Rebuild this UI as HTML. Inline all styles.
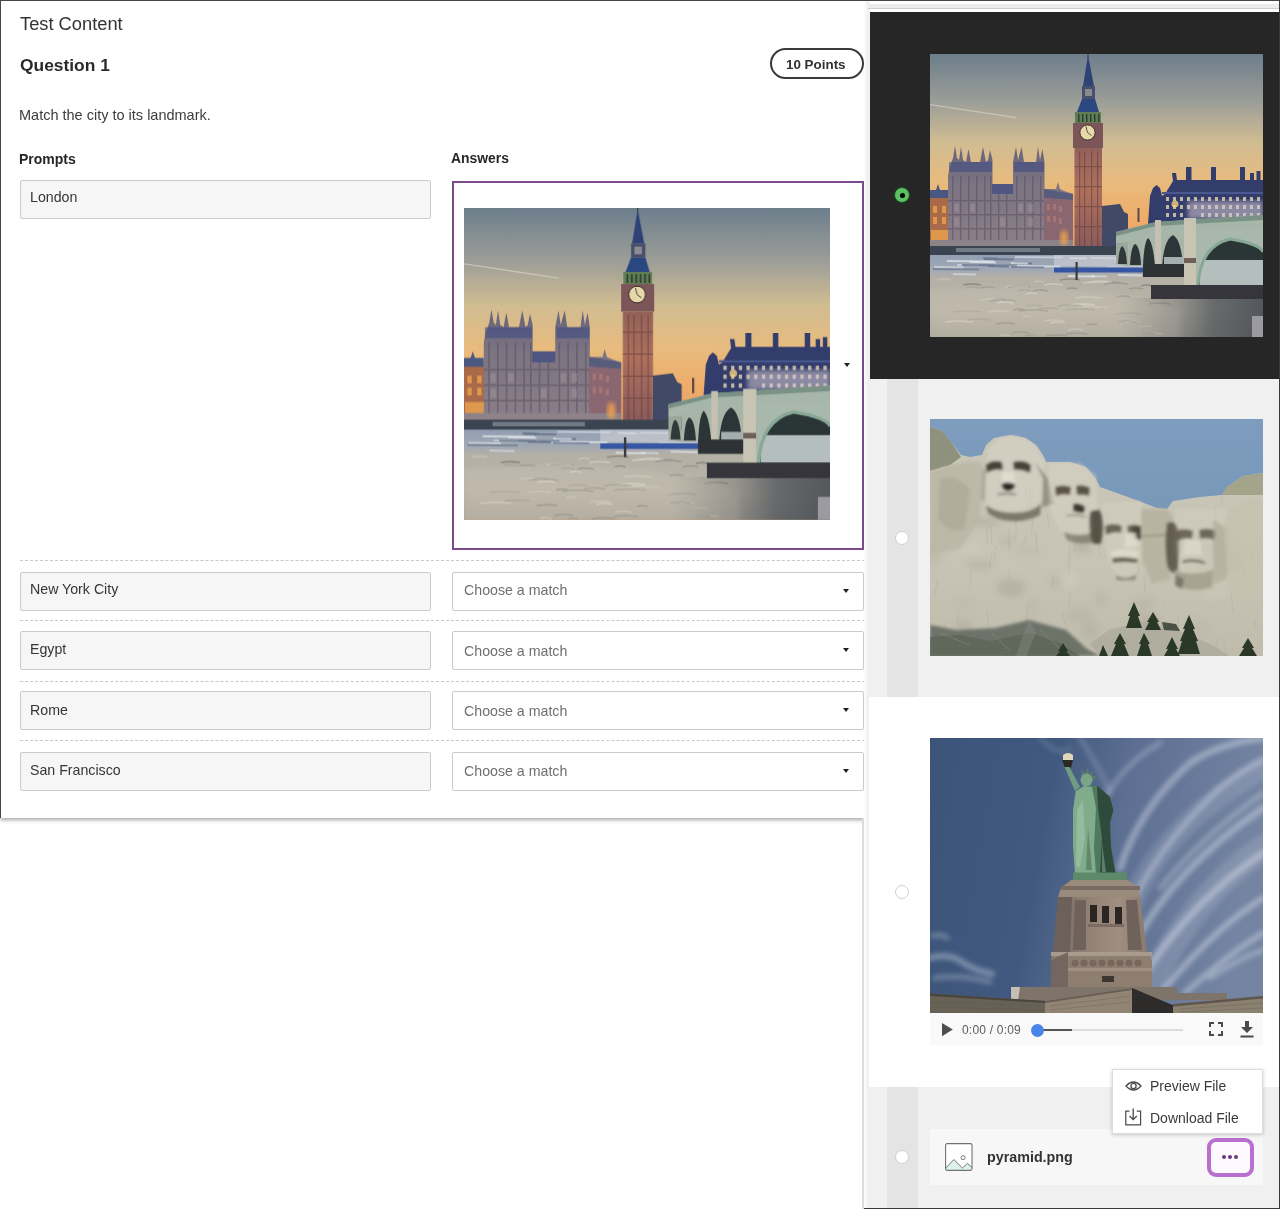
<!DOCTYPE html>
<html><head><meta charset="utf-8">
<style>
*{box-sizing:border-box;margin:0;padding:0}
html,body{width:1280px;height:1209px;overflow:hidden;background:#fff}
body{position:relative;font-family:"Liberation Sans",sans-serif;color:#333;-webkit-font-smoothing:antialiased}
.t,.prompt span,.sel span{will-change:transform}
.abs{position:absolute}
.t{position:absolute;white-space:nowrap;line-height:1}
#card{position:absolute;left:0;top:0;width:865px;height:818px;background:#fff;box-shadow:0 2px 4px rgba(0,0,0,.35)}
.prompt{position:absolute;left:20px;width:411px;height:39px;background:#f6f6f6;border:1px solid #cbcbcb;border-radius:2px}
.prompt span{position:absolute;left:8.7px;top:9.2px;font-size:14.2px;color:#363636;line-height:1}
.sel{position:absolute;left:452px;width:412px;height:39px;background:#fff;border:1px solid #cbcbcb;border-radius:2px}
.sel span{position:absolute;left:11px;top:10.2px;font-size:14.2px;color:#6f6f6f;line-height:1}
.tri{position:absolute;width:0;height:0;border-left:3px solid transparent;border-right:3px solid transparent;border-top:4px solid #222}
.sel .tri{left:390px;top:16px}
.dash{position:absolute;left:20px;width:845px;height:0;border-top:1px dashed #c8c8c8}
#rp{position:absolute;left:864px;top:0;width:416px;height:1209px;background:#fff}
.radio{position:absolute;width:14px;height:14px;border-radius:50%;background:#fff;border:1px solid #cfcfcf}
</style></head><body>
<!-- top border line -->
<div class="abs" style="left:0;top:0;width:1280px;height:1px;background:#444;z-index:50"></div>
<div class="abs" style="left:1279px;top:0;width:1px;height:1209px;background:#3a3a3a;z-index:50"></div>
<div class="abs" style="left:864px;top:1208px;width:416px;height:1px;background:#3a3a3a;z-index:50"></div>

<div id="card">
  <div class="abs" style="left:0;top:0;width:1px;height:818px;background:#464646;z-index:5"></div>
  <div class="t" style="left:19.5px;top:15px;font-size:18.3px;color:#333">Test Content</div>
  <div class="t" style="left:19.5px;top:57px;font-size:17.4px;font-weight:700;color:#2a2a2a">Question 1</div>
  <div class="abs" style="left:770px;top:48px;width:94px;height:31px;border:2px solid #3a3a3a;border-radius:16px"></div>
  <div class="t" style="left:786px;top:58px;font-size:13.4px;font-weight:700;color:#303030">10 Points</div>
  <div class="t" style="left:19px;top:108px;font-size:14.5px;color:#3c3c3c">Match the city to its landmark.</div>
  <div class="t" style="left:19px;top:152px;font-size:14px;font-weight:700;color:#262626">Prompts</div>
  <div class="t" style="left:451px;top:152px;font-size:13.9px;font-weight:700;color:#262626">Answers</div>

  <div class="prompt" style="top:180px"><span>London</span></div>
  <div class="abs" style="left:452px;top:181px;width:412px;height:369px;border:2px solid #7b4b8c;background:#fff">
    <svg class="abs" style="left:10px;top:25px" width="366" height="312"><use href="#london" width="366" height="312"/></svg>
    <div class="tri" style="left:390px;top:180px"></div>
  </div>

  <div class="dash" style="top:560px"></div>
  <div class="prompt" style="top:572px"><span>New York City</span></div>
  <div class="sel" style="top:572px"><span>Choose a match</span><div class="tri"></div></div>
  <div class="dash" style="top:620px"></div>
  <div class="prompt" style="top:631px"><span style="top:10.4px">Egypt</span></div>
  <div class="sel" style="top:631px"><span style="top:11.6px">Choose a match</span><div class="tri"></div></div>
  <div class="dash" style="top:681px"></div>
  <div class="prompt" style="top:691px"><span style="top:10.9px">Rome</span></div>
  <div class="sel" style="top:691px"><span style="top:11.6px">Choose a match</span><div class="tri"></div></div>
  <div class="dash" style="top:740px"></div>
  <div class="prompt" style="top:752px"><span style="top:10.2px">San Francisco</span></div>
  <div class="sel" style="top:752px"><span style="top:11.2px">Choose a match</span><div class="tri"></div></div>
</div>

<div id="rp">
  <!-- left light edge -->
  <div class="abs" style="left:0;top:0;width:6px;height:1209px;background:linear-gradient(90deg,#fdfdfd,#efefef 75%,#f4f4f4)"></div>
  <div class="abs" style="left:-2px;top:818px;width:2px;height:391px;background:#dcdcdc"></div>
  <div class="abs" style="left:4px;top:4px;width:412px;height:5px;background:#ececec"></div>
  <div class="abs" style="left:4px;top:8px;width:412px;height:1px;background:#cfcfcf"></div>

  <!-- section 1 dark -->
  <div class="abs" style="left:6px;top:12px;width:410px;height:367px;background:#262626">
  </div>
  <div class="abs" style="left:30px;top:187px;width:16px;height:16px;border-radius:50%;background:#5cbf62;border:1px solid #1a4a1f"></div>
  <div class="abs" style="left:35.5px;top:192.5px;width:5px;height:5px;border-radius:50%;background:#000"></div>
  <svg class="abs" style="left:66px;top:54px" width="333" height="283"><use href="#london" width="333" height="283"/></svg>

  <!-- section 2 gray -->
  <div class="abs" style="left:6px;top:379px;width:410px;height:318px;background:#f0f0f0"></div>
  <div class="abs" style="left:23px;top:379px;width:31px;height:318px;background:#e4e4e4"></div>
  <div class="radio" style="left:31px;top:531px"></div>
  <svg class="abs" style="left:66px;top:419px" width="333" height="237" viewBox="0 0 333 237" id="rushmore">
    <defs>
      <linearGradient id="rsky" x1="0" y1="0" x2="0" y2="1"><stop offset="0" stop-color="#7e9dbe"/><stop offset="1" stop-color="#7090b0"/></linearGradient>
      <linearGradient id="rstone" x1="0" y1="0" x2="0" y2="1"><stop offset="0" stop-color="#c9c6b8"/><stop offset="0.6" stop-color="#c7c4b5"/><stop offset="1" stop-color="#bfbcac"/></linearGradient>
      <filter id="rblur" x="-5%" y="-5%" width="110%" height="110%"><feGaussianBlur stdDeviation="1.5"/></filter>
      <clipPath id="rclip"><path d="M0 8 L12 12 L22 24 L31 36 L40 38 L52 36 L56 26 L64 19 L81 16 L96 19 L106 26 L113 36 L116 43 L140 43 L156 48 L166 60 L170 68 L198 78 L227 89 L237 90 L243 82 L270 78 L292 76 L297 68 L313 57 L333 54 L333 237 L0 237Z"/></clipPath>
      <filter id="rblur3" x="-10%" y="-10%" width="120%" height="120%"><feGaussianBlur stdDeviation="3"/></filter>
    </defs>
    <rect width="333" height="237" fill="url(#rsky)"/>
    <path d="M0 8 L12 12 L22 24 L31 36 L40 38 L52 36 L56 26 L64 19 L81 16 L96 19 L106 26 L113 36 L116 43 L140 43 L156 48 L166 60 L170 68 L198 78 L227 89 L237 90 L243 82 L270 78 L292 76 L297 68 L313 57 L333 54 L333 237 L0 237Z" fill="url(#rstone)"/>
    <g filter="url(#rblur3)"><ellipse cx="171" cy="180" rx="6" ry="8" fill="#a8a494" opacity="0.24"/><ellipse cx="300" cy="143" rx="14" ry="11" fill="#9c9888" opacity="0.20"/><ellipse cx="221" cy="208" rx="12" ry="11" fill="#9c9888" opacity="0.26"/><ellipse cx="214" cy="184" rx="11" ry="5" fill="#a8a494" opacity="0.27"/><ellipse cx="152" cy="127" rx="9" ry="8" fill="#9c9888" opacity="0.26"/><ellipse cx="57" cy="103" rx="13" ry="5" fill="#9c9888" opacity="0.32"/><ellipse cx="268" cy="210" rx="11" ry="11" fill="#b4b0a0" opacity="0.16"/><ellipse cx="34" cy="186" rx="14" ry="5" fill="#b4b0a0" opacity="0.21"/><ellipse cx="265" cy="128" rx="7" ry="6" fill="#9c9888" opacity="0.27"/><ellipse cx="81" cy="169" rx="14" ry="9" fill="#9c9888" opacity="0.34"/><ellipse cx="160" cy="212" rx="9" ry="10" fill="#9c9888" opacity="0.18"/><ellipse cx="50" cy="146" rx="14" ry="5" fill="#9c9888" opacity="0.25"/><ellipse cx="293" cy="159" rx="9" ry="10" fill="#dcd8ca" opacity="0.19"/><ellipse cx="241" cy="117" rx="10" ry="12" fill="#dcd8ca" opacity="0.32"/><ellipse cx="215" cy="198" rx="11" ry="9" fill="#b4b0a0" opacity="0.35"/><ellipse cx="98" cy="131" rx="13" ry="6" fill="#b4b0a0" opacity="0.26"/><ellipse cx="103" cy="189" rx="6" ry="12" fill="#b4b0a0" opacity="0.25"/><ellipse cx="150" cy="196" rx="13" ry="9" fill="#a8a494" opacity="0.25"/><ellipse cx="274" cy="146" rx="12" ry="12" fill="#b4b0a0" opacity="0.24"/><ellipse cx="285" cy="175" rx="13" ry="5" fill="#dcd8ca" opacity="0.19"/><ellipse cx="77" cy="122" rx="8" ry="6" fill="#a8a494" opacity="0.29"/><ellipse cx="288" cy="129" rx="14" ry="7" fill="#a8a494" opacity="0.23"/><ellipse cx="38" cy="130" rx="14" ry="4" fill="#dcd8ca" opacity="0.24"/><ellipse cx="2" cy="139" rx="9" ry="8" fill="#9c9888" opacity="0.19"/><ellipse cx="125" cy="163" rx="6" ry="6" fill="#a8a494" opacity="0.28"/><ellipse cx="140" cy="161" rx="8" ry="8" fill="#dcd8ca" opacity="0.29"/><ellipse cx="242" cy="134" rx="12" ry="10" fill="#dcd8ca" opacity="0.31"/><ellipse cx="34" cy="209" rx="8" ry="9" fill="#9c9888" opacity="0.26"/></g>
    <path d="M0 8 L12 12 L22 24 L31 38 L20 46 L0 52Z" fill="#8e927c"/>
    <path d="M292 76 L297 68 L313 57 L333 54 L333 76Z" fill="#a4a48a"/>
    <path d="M79 150 l0.6 12 M208 71 l2.0 6 M86 99 l-0.2 22 M279 139 l-2.1 16 M211 203 l1.4 14 M224 71 l0.5 18 M100 65 l-0.2 20 M239 205 l2.5 17 M132 192 l2.6 13 M293 76 l-1.7 8 M322 132 l-1.2 16 M169 124 l0.5 12 M195 209 l2.6 17 M285 224 l-2.0 17 M287 219 l0.4 20 M238 95 l0.4 19 M95 70 l2.9 20 M29 192 l-2.1 13 M98 187 l-2.7 20 M205 67 l-1.0 17 M293 222 l3.0 14 M103 73 l-2.8 16 M66 127 l-2.1 16 M14 203 l2.8 11 M299 122 l0.1 13 M214 158 l0.7 15 M313 144 l1.3 13 M79 110 l0.1 22 M183 62 l0.5 13 M7 162 l-2.6 16 M209 137 l-0.9 17 M235 182 l-2.6 6 M225 219 l-0.3 10 M197 113 l-1.1 12 M123 158 l-0.7 11 M257 64 l1.4 15 M103 97 l-1.6 19 M62 132 l-2.4 17 M107 115 l-0.4 19 M285 88 l0.9 11 M295 134 l-2.3 10 M176 91 l2.0 19 M61 106 l0.9 19 M268 117 l-1.2 8 M264 105 l-0.5 12 M140 128 l-2.1 21 M2 216 l2.9 20 M145 217 l-1.7 21 M248 198 l0.1 17 M96 116 l-2.6 10 M196 107 l-2.7 19 M301 174 l2.4 21 M300 155 l1.5 6 M57 109 l0.1 17 M138 215 l-1.0 16 M84 202 l1.7 14 M117 93 l1.9 15 M57 191 l1.8 21 M274 61 l2.2 16 M17 105 l0.2 10 M141 138 l-3.0 18 M18 81 l-2.6 8 M325 201 l0.0 7 M105 112 l0.9 12 M195 120 l-1.0 9 M41 152 l-0.7 17 M27 89 l0.6 12 M261 123 l0.7 19 M144 121 l1.2 14 M140 175 l-1.5 13" stroke="#8a8676" stroke-width=".8" opacity=".2" fill="none" clip-path="url(#rclip)"/>
    <g filter="url(#rblur)">
      <path d="M0 52 L20 46 L40 42 L52 44 L50 100 L30 130 L0 135Z" fill="#b4b09e" opacity=".6"/>
      <path d="M10 60 Q25 55 40 70 L35 110 Q20 115 8 100Z" fill="#a4a090" opacity=".5"/>
      <!-- Washington -->
      <path d="M54 84 L57.5 31 L71 18 L87.5 17 L105 26 L115 43.5 L113 80 Q100 92 84 92 Q64 92 54 84Z" fill="#d8d4c6" opacity=".55"/>
      <path d="M56 46 Q62 40 72 43 L73 51 Q64 49 57 54Z" fill="#4a4236"/>
      <path d="M83 43 Q94 40 101 46 L100 54 Q92 50 84 51Z" fill="#4a4236"/>
      <path d="M72 53 L84 53 L86 66 L72 66Z" fill="#e2decf" opacity=".8"/>
      <path d="M71.5 65 Q78 62 85.5 65.5 Q84 72 78 72 Q72 72 71.5 65Z" fill="#2e2a24"/>
      <path d="M67.5 75.5 Q77 73.5 86 75.5" stroke="#6a6252" stroke-width="1.5" fill="none"/>
      <path d="M56 86 Q66 94 84 94 Q102 94 111 85 L110 96 Q96 103 82 102 Q66 101 58 94Z" fill="#5e574a" opacity=".7"/>
      <path d="M105 43 L118 60 L124 85 L112 88 L113 60Z" fill="#8a8474" opacity=".8"/>
      <path d="M52 50 L56 50 L55 84 L51 80Z" fill="#9a9686" opacity=".6"/>
      <!-- Jefferson -->
      <path d="M118 44 L150 44 L166 56 L168 90 L162 114 Q145 118 130 112 L120 92 L118 60Z" fill="#d8d4c6" opacity=".5"/>
      <path d="M125 68 Q133 65 141 68 L140 76 Q133 74 126 77Z" fill="#5a5244"/>
      <path d="M146 67 Q154 65 160 69 L159 77 Q153 75 147 76Z" fill="#5a5244"/>
      <path d="M143 85 Q150 83 155 88 L154 94 Q148 94 143 92Z" fill="#3e382e"/>
      <path d="M136 97 Q146 95 156 98" stroke="#7a7262" stroke-width="1.2" fill="none"/>
      <path d="M134 113 Q150 119 166 112 L165 123 Q150 127 137 121Z" fill="#6a6252" opacity=".6"/>
      <path d="M162 93 L170 90 L171 125 L163 125Z" fill="#5e584a" opacity=".8"/>
      <!-- Roosevelt -->
      <path d="M160 93 Q168 88 172 96 Q175 110 171 124 Q164 126 161 120 Q158 106 160 93Z" fill="#544e42" opacity=".85"/>
      <path d="M172 84 L212 82 L213 130 Q210 158 194 159 Q180 156 176 130Z" fill="#d6d2c4" opacity=".45"/>
      <path d="M175 107 Q183 103 192 107 L191 114 Q184 112 176 116Z" fill="#5a5242" opacity=".85"/><path d="M197 107 Q205 104 211 107 L211 115 Q204 113 198 114Z" fill="#5a5242" opacity=".85"/>
      <path d="M202 108 L211 108 L211 121 L203 119Z" fill="#4a4236"/>
      <path d="M195 114 L206 114 L208 128 L194 128Z" fill="#e0dccf" opacity=".8"/>
      <path d="M181 132 Q195 128 209 133 L208 140 Q195 137 182 140Z" fill="#dcd8ca"/>
      <path d="M182 139 Q195 137 208 140 L207 144 Q195 142 183 144Z" fill="#6a6454"/>
      <path d="M186 156 Q195 162 206 156 L205 161 L187 161Z" fill="#7a7464" opacity=".8"/>
      <path d="M211 90 L237 90 L243 98 L240 160 L222 165 L212 140Z" fill="#b4b09e" opacity=".8"/>
      <path d="M212 117 L236 116" stroke="#7a7464" stroke-width="1.2"/>
      <!-- Lincoln -->
      <path d="M237 104 Q246 100 249 112 Q251 132 247 154 Q240 156 237 146 Q234 124 237 104Z" fill="#544e42" opacity=".85"/>
      <path d="M245 90 L297 90 L298 140 Q292 168 270 170 Q252 168 248 140Z" fill="#d4d0c2" opacity=".45"/>
      <path d="M246 112 Q254 108 263 112 L262 120 Q255 118 247 122Z" fill="#5e5646" opacity=".85"/><path d="M269 111 Q278 108 286 112 L285 121 Q277 118 270 120Z" fill="#5e5646" opacity=".85"/>
      <path d="M255 121 L270 121 L272 136 L254 136Z" fill="#dedacc" opacity=".8"/>
      <path d="M252.5 143 Q263 140 275 144" stroke="#5a5244" stroke-width="2.2" fill="none"/>
      <path d="M244 151 Q262 158 283 151 L282 168 Q264 174 246 167Z" fill="#a8a290"/>
      <path d="M246 156 L254 160 L252 170 L245 166Z" fill="#6a6454" opacity=".7"/>
      <path d="M283 100 L298 110 L297 160 L283 165Z" fill="#aaa694" opacity=".6"/>
      <path d="M294 96 L320 80 L333 84 L333 180 L300 175 L296 140Z" fill="#c6c2ae" opacity=".7"/>
    </g>
    <!-- bottom dark rock -->
    <path d="M0 206 L26 211 L65 209 L99 201 L110 204 L136 211 L157 230 L170 237 L0 237Z" fill="#6e736a" filter="url(#rblur)"/>
    <path d="M0 218 L30 216 L60 222 L100 214 L130 224 L150 237 L0 237Z" fill="#5a6256" opacity=".7"/>
    <path d="M99 201 L106 214 L96 237 L86 237 L94 214Z" fill="#8e9486" opacity=".35"/>
    <path d="M10 214 L40 226 M60 212 L80 232 M110 210 L130 230" stroke="#8a9080" stroke-width="1" opacity=".5"/>
    <!-- rubble slope -->
    <path d="M160 225 L180 210 L215 203 L250 212 L280 225 L300 237 L170 237Z" fill="#aaa898" opacity=".7"/>
    <!-- trees -->
    <g fill="#2a3828">
      <path d="M204 183 L198 197 L200 197 L196 209 L212 209 L208 197 L210 197Z"/>
      <path d="M223 193 L217 203 L219 203 L215 211 L231 211 L227 203 L229 203Z"/>
      <path d="M259 196 L253 210 L255 210 L250 222 L252 222 L248 235 L270 235 L266 222 L268 222 L263 210 L265 210Z"/>
      <path d="M190 214 L184 225 L186 225 L181 237 L199 237 L194 225 L196 225Z"/>
      <path d="M214 214 L209 225 L211 225 L207 237 L222 237 L218 225 L220 225Z"/>
      <path d="M242 218 L236 230 L238 230 L234 237 L250 237 L246 230 L248 230Z"/>
      <path d="M318 219 L312 229 L314 229 L309 237 L327 237 L322 229 L324 229Z"/>
      <path d="M133 224 L128 232 L130 232 L126 237 L140 237 L136 232 L138 232Z"/>
      <path d="M173 226 L169 237 L178 237Z"/>
      <path d="M232 203 L246 205 L250 212 L234 211Z" opacity=".8"/>
    </g>
  </svg>

  <!-- section 3 white -->
  <div class="abs" style="left:5px;top:697px;width:411px;height:390px;background:#fff"></div>
  <div class="radio" style="left:31px;top:885px"></div>
  <svg class="abs" style="left:66px;top:738px" width="333" height="275" viewBox="0 0 333 275" id="statue">
    <defs>
      <linearGradient id="ssky" x1="0" y1="0" x2="1" y2="0.15">
        <stop offset="0" stop-color="#3c5479"/>
        <stop offset="0.38" stop-color="#42597f"/>
        <stop offset="0.6" stop-color="#5c6e92"/>
        <stop offset="1" stop-color="#7484a2"/>
      </linearGradient>
      <linearGradient id="sbody" x1="0" y1="0" x2="1" y2="0">
        <stop offset="0" stop-color="#7aaa88"/>
        <stop offset="0.5" stop-color="#5e8e70"/>
        <stop offset="1" stop-color="#2e4a3a"/>
      </linearGradient>
      <linearGradient id="sped" x1="0" y1="0" x2="1" y2="0">
        <stop offset="0" stop-color="#6e625c"/>
        <stop offset="0.3" stop-color="#8e7e72"/>
        <stop offset="0.7" stop-color="#a08e80"/>
        <stop offset="1" stop-color="#8a7a6e"/>
      </linearGradient>
      <filter id="sblur" x="-20%" y="-20%" width="140%" height="140%"><feGaussianBlur stdDeviation="2.6"/></filter>
    </defs>
    <rect width="333" height="275" fill="url(#ssky)"/>
    <g filter="url(#sblur)" fill="none" stroke="#ccd4e2" stroke-linecap="round">
      <path d="M200 170 Q230 90 333 30" stroke-width="22" opacity=".18"/>
      <path d="M220 250 Q260 160 333 110" stroke-width="26" opacity=".2"/>
      <path d="M190 130 Q210 70 260 25 Q290 5 333 0" stroke-width="7" opacity=".5"/>
      <path d="M195 180 Q225 110 290 50 Q315 30 333 22" stroke-width="6" opacity=".45"/>
      <path d="M205 205 Q245 130 333 70" stroke-width="7" opacity=".5"/>
      <path d="M215 235 Q265 160 333 115" stroke-width="7" opacity=".55"/>
      <path d="M235 250 Q285 190 333 160" stroke-width="6" opacity=".55"/>
      <path d="M255 255 Q300 215 333 195" stroke-width="6" opacity=".5"/>
      <path d="M230 150 Q270 100 333 55" stroke-width="5" opacity=".4"/>
      <path d="M280 240 Q310 220 333 212" stroke-width="5" opacity=".45"/>
      <path d="M175 60 Q195 25 230 5" stroke-width="6" opacity=".3"/>
      <path d="M150 0 Q170 30 180 55" stroke-width="5" opacity=".22"/>
      <path d="M110 0 Q130 20 140 10" stroke-width="4" opacity=".18"/>
      <path d="M2 198 Q10 195 18 200" stroke-width="4" opacity=".4"/>
      <path d="M0 220 Q20 214 35 226 Q45 232 62 236" stroke-width="6" opacity=".45"/>
      <path d="M5 240 Q30 236 60 244" stroke-width="5" opacity=".35"/>
    </g>
    <!-- statue -->
    <path d="M133 17 Q138 13 143 17 L143 22 L133 22Z" fill="#e0d8b8"/>
    <path d="M132 22 L143 22 L141 29.7 L135 29.7Z" fill="#2a2a22"/>
    <path d="M134.5 29 L139.5 29 L150 49 L145 53Z" fill="#6e9c80"/>
    <path d="M151 38 L152 31 L155 36 L158 29 L159 36 L163 32 L162 38 L167 38 L163 43Z" fill="#5a8068" opacity=".8"/>
    <ellipse cx="156.5" cy="42" rx="6" ry="6.5" fill="#7aa686"/>
    <path d="M145.8 53 L154 48 L167 47.5 L180 59 L183.4 72 L180 85 L181 109 L185.6 136 L145 136 L143 106.6 L143 72Z" fill="#4e7a60"/>
    <path d="M145.8 53 L154 48 L162 49 L166 70 L164 110 L166 136 L145 136 L143 106.6 L143 72Z" fill="#80ac8c"/>
    <path d="M147 72 L153 62 L155 100 L150 130 L146 128Z" fill="#a4c8ac" opacity=".55"/>
    <path d="M167 47.5 L180 59 L183.4 72 L180 85 L181 109 L185.6 136 L170 136 L172 100 L168 70Z" fill="#2e4a3a"/>
    <path d="M158 90 L162 132 L156 132Z" fill="#4a6e58" opacity=".6"/>
    <path d="M172 105 L176 134 L172 134Z" fill="#8ab094" opacity=".5"/>
    <!-- pedestal -->
    <rect x="143" y="134.5" width="54" height="8" fill="#5c8a6a"/>
    <path d="M141 142 L198 142 L209 150 L210 159 L128 159 L131 150Z" fill="#9a8a7c"/>
    <rect x="131" y="148" width="79" height="4" fill="#7a6c62"/>
    <path d="M128 159 L210 159 L217 214 L123 214Z" fill="url(#sped)"/>
    <path d="M128 159 L142 159 L140 214 L123 214Z" fill="#6c605a"/>
    <g fill="#6e625a"><path d="M145 162 L156 162 L156 212 L143 212Z"/><path d="M196 162 L207 162 L212 212 L198 212Z"/></g>
    <g fill="#2c2622"><rect x="160" y="167" width="7" height="17"/><rect x="172" y="168" width="7" height="17"/><rect x="185" y="169" width="7" height="17"/></g>
    <rect x="158" y="186" width="36" height="3" fill="#7a6c62"/>
    <path d="M123 214 L217 214 L222 222 L222 249 L121 249 L121 222Z" fill="#8e7e70"/>
    <rect x="121" y="214" width="101" height="4" fill="#a89a8c"/>
    <g fill="#76665c"><circle cx="145" cy="225" r="3.6"/><circle cx="154" cy="225" r="3.6"/><circle cx="163" cy="225" r="3.6"/><circle cx="172" cy="225" r="3.6"/><circle cx="181" cy="225" r="3.6"/><circle cx="190" cy="225" r="3.6"/><circle cx="199" cy="225" r="3.6"/><circle cx="208" cy="225" r="3.6"/></g>
    <rect x="136" y="230" width="86" height="3" fill="#a09080"/>
    <path d="M121 222 L138 214 L138 249 L121 249Z" fill="#6e625a" opacity=".85"/>
    <rect x="172" y="238" width="12" height="6" fill="#3e3630"/>
    <!-- fort -->
    <path d="M81 249 L247 249 L247 255 L297 255 L297 262 L81 263Z" fill="#7e746a"/>
    <path d="M81 249 L90 249 L88 263 L81 263Z" fill="#d8d0c8" opacity=".8"/>
    <path d="M0 255.5 L115 263 L115 275 L0 275Z" fill="#686256"/>
    <path d="M0 255.5 L115 263 L115 265 L0 258Z" fill="#4a463e"/>
    <path d="M115 263 L202 250 L202 275 L115 275Z" fill="#928474"/>
    <path d="M115 263 L202 250 L202 252 L115 265Z" fill="#6a5e54"/>
    <path d="M202 250 L245 268 L245 275 L202 275Z" fill="#2e2c2a"/>
    <path d="M243 266 L333 258 L333 275 L243 275Z" fill="#8a8070"/>
    <path d="M243 266 L333 258 L333 260.5 L243 268.5Z" fill="#5e564e"/>
    <g stroke="#5a5046" stroke-width=".6" opacity=".45"><path d="M0 264 L115 268 M0 269 L115 272 M120 268 L200 258 M120 272 L200 264 M250 271 L333 265 M250 274 L333 270"/></g>
  </svg>
  <div class="abs" style="left:66px;top:1013px;width:333px;height:32px;background:#f9f9f9"></div>
  <svg class="abs" style="left:77.5px;top:1022.5px" width="12" height="14" viewBox="0 0 12 14"><path d="M0 0 L10.8 6.6 L0 13.2Z" fill="#4e4e4e"/></svg>
  <div class="t" style="left:97.5px;top:1023.5px;font-size:12px;letter-spacing:.2px;color:#5c5c5c">0:00 / 0:09</div>
  <div class="abs" style="left:173px;top:1029px;width:146px;height:2px;background:#dcdcdc"></div>
  <div class="abs" style="left:173px;top:1029px;width:35px;height:2px;background:#555"></div>
  <div class="abs" style="left:166.5px;top:1023.5px;width:13px;height:13px;border-radius:50%;background:#4a84e8"></div>
  <svg class="abs" style="left:345px;top:1022px" width="14" height="14" viewBox="0 0 14 14"><path d="M1 5 V1 H5 M9 1 H13 V5 M13 9 V13 H9 M5 13 H1 V9" stroke="#4a4a4a" stroke-width="2" fill="none"/></svg>
  <svg class="abs" style="left:376px;top:1021px" width="14" height="17" viewBox="0 0 14 17"><path d="M5 0 H9 V6 H13 L7 12 L1 6 H5Z" fill="#4a4a4a"/><rect x="0.5" y="14.5" width="13" height="2" fill="#4a4a4a"/></svg>

  <!-- section 4 gray -->
  <div class="abs" style="left:6px;top:1087px;width:410px;height:121px;background:#f0f0f0"></div>
  <div class="abs" style="left:23px;top:1087px;width:31px;height:121px;background:#e4e4e4"></div>
  <div class="radio" style="left:31px;top:1150px"></div>
  <div class="abs" style="left:66px;top:1129px;width:333px;height:56px;background:#f7f7f7"></div>
  <svg class="abs" style="left:81px;top:1143px" width="28" height="28" viewBox="0 0 28 28">
    <rect x="0.6" y="0.6" width="26.4" height="26.8" rx="1.6" fill="#fff"/>
    <path d="M0.8 25 L8.8 16.6 L17.5 25 L22.4 20.4 L27 24.6 L27 27.4 L0.8 27.4Z" fill="#dcf3ea"/>
    <path d="M0.8 25 L8.8 16.6 L17.5 25 L22.4 20.4 L27 24.6" stroke="#6f7775" stroke-width="1" fill="none"/>
    <rect x="0.6" y="0.6" width="26.4" height="26.8" rx="1.6" fill="none" stroke="#6f7473" stroke-width="1.1"/>
    <circle cx="18.1" cy="14.7" r="2" fill="none" stroke="#6f7775" stroke-width="1"/>
  </svg>
  <div class="t" style="left:123px;top:1150px;font-size:14.3px;font-weight:700;color:#333">pyramid.png</div>
  <div class="abs" style="left:343px;top:1138px;width:47px;height:39px;border:4px solid #b86fd0;border-radius:9px;background:#fcfafc"></div>
  <div class="abs" style="left:358px;top:1155px;width:4px;height:4px;border-radius:50%;background:#6a3a80"></div>
  <div class="abs" style="left:364px;top:1155px;width:4px;height:4px;border-radius:50%;background:#6a3a80"></div>
  <div class="abs" style="left:370px;top:1155px;width:4px;height:4px;border-radius:50%;background:#6a3a80"></div>
  <!-- menu -->
  <div class="abs" style="left:248px;top:1069px;width:151px;height:65px;background:#fff;border:1px solid #dcdcdc;box-shadow:0 1px 4px rgba(0,0,0,.2)"></div>
  <svg class="abs" style="left:261px;top:1080px" width="17" height="12" viewBox="0 0 17 12"><path d="M1 6 Q8.5 -2 16 6 Q8.5 14 1 6Z" fill="none" stroke="#4a4a4a" stroke-width="1.3"/><circle cx="8.5" cy="6" r="2.6" fill="none" stroke="#4a4a4a" stroke-width="1.3"/></svg>
  <div class="t" style="left:286px;top:1079px;font-size:14px;color:#3a3a3a">Preview File</div>
  <svg class="abs" style="left:261px;top:1108px" width="17" height="18" viewBox="0 0 17 18"><path d="M4.5 3.2 H0.8 V16.8 H15.6 V3.2 H11.8" fill="none" stroke="#4a4a4a" stroke-width="1.2"/><path d="M8.2 0.5 V11.5 M4.6 8 L8.2 11.6 L11.8 8" fill="none" stroke="#4a4a4a" stroke-width="1.3"/></svg>
  <div class="t" style="left:286px;top:1111px;font-size:14px;color:#3a3a3a">Download File</div>
</div>

<svg width="0" height="0" style="position:absolute">
  <defs>
    <symbol id="london" viewBox="0 0 333 283" preserveAspectRatio="none">
      <linearGradient id="lsky" x1="0" y1="0" x2="0" y2="1">
        <stop offset="0" stop-color="#6d7e8c"/>
        <stop offset="0.17" stop-color="#9c9e98"/>
        <stop offset="0.31" stop-color="#d0bc92"/>
        <stop offset="0.45" stop-color="#e8bb7e"/>
        <stop offset="0.56" stop-color="#eeae6c"/>
        <stop offset="0.7" stop-color="#ea9e60"/>
      </linearGradient>
      <linearGradient id="lwater" x1="0" y1="0" x2="0" y2="1">
        <stop offset="0" stop-color="#8e9cb2"/>
        <stop offset="0.22" stop-color="#a0a8b4"/>
        <stop offset="0.32" stop-color="#b4b0a6"/>
        <stop offset="0.7" stop-color="#bab4a6"/>
        <stop offset="1" stop-color="#aaa498"/>
      </linearGradient>
      <linearGradient id="lwdark" x1="0" y1="0" x2="1" y2="0">
        <stop offset="0" stop-color="#464c54" stop-opacity="0"/>
        <stop offset="0.4" stop-color="#464c54" stop-opacity=".3"/>
        <stop offset="0.65" stop-color="#464c54" stop-opacity=".7"/>
        <stop offset="1" stop-color="#42474e" stop-opacity=".85"/>
      </linearGradient>
      <linearGradient id="ltower" x1="0" y1="0" x2="0" y2="1">
        <stop offset="0" stop-color="#94625a"/>
        <stop offset="0.4" stop-color="#ae705c"/>
        <stop offset="1" stop-color="#86585c"/>
      </linearGradient>
      <linearGradient id="lparl" x1="0" y1="0" x2="0" y2="1">
        <stop offset="0" stop-color="#66627a"/>
        <stop offset="0.35" stop-color="#7c7482"/>
        <stop offset="1" stop-color="#8c8088"/>
      </linearGradient>
      <filter id="lsoft"><feGaussianBlur stdDeviation="0.6"/></filter>
      <filter id="lblur2"><feGaussianBlur stdDeviation="2"/></filter>
      <rect width="333" height="283" fill="url(#lsky)"/>
      <path d="M0 50.6 L86 63.6" stroke="#ece8e0" stroke-width="1.2" opacity=".45"/>
      <g filter="url(#lsoft)">
      <!-- far left building -->
      <path d="M0 136 L6 136 L8 130 L10 136 L18 136 L18 200 L0 200Z" fill="#4a5880"/>
      <rect x="0" y="144" width="26" height="52" fill="#a86a4a"/>
      <g fill="#f0a850" opacity=".75"><rect x="1" y="176" width="23" height="11"/><rect x="3" y="152" width="4" height="7"/><rect x="12" y="152" width="4" height="7"/><rect x="3" y="163" width="4" height="7"/><rect x="12" y="163" width="4" height="7"/></g>
      <!-- parliament -->
      <path d="M18 200 L18 122 L20 112 L23 104 L25 92 L27 104 L29 106 L31 93 L33 106 L36 108 L38.5 95 L41 108 L50 108 L53 93 L56 108 L58 106 L60 96 L62.5 106 L62.5 130 L83 130 L83 108 L86 93 L88 106 L91.6 93 L94 108 L106 108 L108 93 L110 106 L112.4 95 L114.5 108 L114.5 135 L126 135 L128 128 L130 135 L134 137 L143 140 L143 200Z" fill="url(#lparl)"/>
      <path d="M19 108 L62 108 L62 118 L19 118Z" fill="#3c4a82" opacity=".55"/>
      <path d="M84 108 L114 108 L114 118 L84 118Z" fill="#3c4a82" opacity=".55"/>
      <path d="M62 130 L83 130 L83 140 L62 140Z" fill="#3c4a82" opacity=".7"/>
      <path d="M114 135 L143 140 L143 146 L114 144Z" fill="#4a5078" opacity=".7"/>
      <g fill="#5a5062" opacity=".55">
        <rect x="22" y="122" width="1.5" height="70"/><rect x="30" y="122" width="1.5" height="70"/><rect x="38" y="122" width="1.5" height="70"/><rect x="46" y="122" width="1.5" height="70"/><rect x="54" y="122" width="1.5" height="70"/><rect x="60" y="122" width="1.5" height="70"/>
        <rect x="68" y="140" width="1.5" height="52"/><rect x="76" y="140" width="1.5" height="52"/><rect x="86" y="122" width="1.5" height="70"/><rect x="94" y="122" width="1.5" height="70"/><rect x="102" y="122" width="1.5" height="70"/><rect x="110" y="122" width="1.5" height="70"/>
        <rect x="18" y="146" width="96" height="1.5"/><rect x="18" y="160" width="96" height="1.5"/><rect x="18" y="174" width="96" height="1.5"/>
      </g>
      <g fill="#a09098" opacity=".5"><rect x="24" y="150" width="5" height="8"/><rect x="40" y="150" width="5" height="8"/><rect x="88" y="150" width="5" height="8"/><rect x="98" y="150" width="5" height="8"/><rect x="24" y="164" width="5" height="8"/><rect x="70" y="164" width="5" height="8"/><rect x="98" y="164" width="5" height="8"/></g>
      <path d="M114 144 L143 146 L143 196 L114 196Z" fill="#8a6670"/>
      <g fill="#b88078" opacity=".6"><rect x="117" y="150" width="3" height="6"/><rect x="123" y="150" width="3" height="6"/><rect x="129" y="152" width="3" height="6"/><rect x="117" y="162" width="3" height="6"/><rect x="123" y="162" width="3" height="6"/><rect x="129" y="164" width="3" height="6"/></g>
      <rect x="0" y="186" width="143" height="7" fill="#8c8288"/>
      <ellipse cx="134" cy="184" rx="4" ry="8" fill="#f4a848" opacity=".8" filter="url(#lblur2)"/>
      <ellipse cx="149" cy="186" rx="5" ry="6" fill="#f4a848" opacity=".85" filter="url(#lblur2)"/>
      <!-- Big Ben -->
      <path d="M158 1 L153 32 L164 32Z" fill="#2e4274"/>
      <rect x="157.6" y="0" width=".8" height="4" fill="#333"/>
      <rect x="152" y="32" width="13" height="13" fill="#47506c"/>
      <rect x="155" y="35" width="7" height="7" fill="#8a8a90"/>
      <path d="M147 58 L152 45 L165 45 L169 58Z" fill="#2c4682"/>
      <rect x="145" y="58" width="26" height="11" fill="#5e7e52"/>
      <g fill="#2e3a30"><rect x="148" y="60" width="1.4" height="8"/><rect x="152" y="60" width="1.4" height="8"/><rect x="156" y="60" width="1.4" height="8"/><rect x="160" y="60" width="1.4" height="8"/><rect x="164" y="60" width="1.4" height="8"/><rect x="168" y="60" width="1.4" height="8"/></g>
      <rect x="143" y="69" width="30" height="25" fill="#7c5458"/>
      <circle cx="157.5" cy="78.5" r="7.6" fill="#e6d8a8" stroke="#3a2a28" stroke-width=".9"/>
      <path d="M157.5 78.5 L156 72.5 M157.5 78.5 L161.5 81.5" stroke="#333" stroke-width=".8"/>
      <rect x="144.5" y="94" width="27.5" height="106" fill="url(#ltower)"/>
      <g fill="#5e3838" opacity=".5"><rect x="149" y="97" width="1.2" height="95"/><rect x="154" y="97" width="1.2" height="95"/><rect x="161" y="97" width="1.2" height="95"/><rect x="167" y="97" width="1.2" height="95"/>
        <rect x="144.5" y="112" width="27.5" height="1.2"/><rect x="144.5" y="132" width="27.5" height="1.2"/><rect x="144.5" y="152" width="27.5" height="1.2"/><rect x="144.5" y="172" width="27.5" height="1.2"/></g>
      
      <!-- background right buildings -->
      <path d="M172 152 L190 150 L194 158 L198 160 L198 196 L172 196Z" fill="#3f4866"/>
      <rect x="207.5" y="154" width="2" height="14" fill="#5a4a48"/>
      <!-- portcullis house -->
      <path d="M218 170 L220 142 L223 134 L226.5 131 L230 134 L232 142 L235 140 L243 127 L242 119 L246 119 L247 126 L256 126 L256 113 L261.5 113 L261.5 126 L281 126 L281 113 L286 113 L286 126 L310 126 L310 113 L315 113 L315 126 L320 126 L320 119 L324 119 L324 126 L326.5 126 L326.5 117 L330.5 117 L330.5 126 L333 126 L333 170Z" fill="#333c6c"/>
      <rect x="232" y="138" width="101" height="2" fill="#4a5890"/>
      <g fill="#e6d6b4" opacity=".8"><rect x="236" y="143" width="3" height="4"/><rect x="243" y="143" width="3" height="4"/><rect x="250" y="143" width="3" height="4"/><rect x="257" y="143" width="3" height="4"/><rect x="264" y="143" width="3" height="4"/><rect x="271" y="143" width="3" height="4"/><rect x="278" y="143" width="3" height="4"/><rect x="285" y="143" width="3" height="4"/><rect x="292" y="143" width="3" height="4"/><rect x="299" y="143" width="3" height="4"/><rect x="306" y="143" width="3" height="4"/><rect x="313" y="143" width="3" height="4"/><rect x="320" y="143" width="3" height="4"/><rect x="327" y="143" width="3" height="4"/>
        <rect x="236" y="151" width="3" height="4"/><rect x="243" y="151" width="3" height="4"/><rect x="250" y="151" width="3" height="4"/><rect x="257" y="151" width="3" height="4"/><rect x="264" y="151" width="3" height="4"/><rect x="236" y="159" width="3" height="4"/><rect x="243" y="159" width="3" height="4"/><rect x="250" y="159" width="3" height="4"/><rect x="271" y="151" width="3" height="4"/><rect x="278" y="151" width="3" height="4"/><rect x="285" y="151" width="3" height="4"/><rect x="292" y="151" width="3" height="4"/><rect x="299" y="151" width="3" height="4"/><rect x="306" y="151" width="3" height="4"/><rect x="313" y="151" width="3" height="4"/><rect x="320" y="151" width="3" height="4"/><rect x="327" y="151" width="3" height="4"/><rect x="271" y="159" width="3" height="4"/><rect x="278" y="159" width="3" height="4"/><rect x="285" y="159" width="3" height="4"/><rect x="292" y="159" width="3" height="4"/><rect x="299" y="159" width="3" height="4"/><rect x="306" y="159" width="3" height="4"/><rect x="313" y="159" width="3" height="4"/><rect x="320" y="159" width="3" height="4"/><rect x="327" y="159" width="3" height="4"/></g>
      <rect x="258" y="147" width="75" height="18" fill="#d4c8d0" opacity=".55" filter="url(#lblur2)"/>
      <circle cx="245" cy="150" r="3.5" fill="#f4d080" opacity=".8"/>
      </g>
      <!-- water -->
      <rect x="0" y="196" width="333" height="87" fill="url(#lwater)"/>
      <rect x="0" y="192" width="214" height="9" fill="#3a4450"/><rect x="26" y="194" width="84" height="4" fill="#8a929c" opacity=".7"/>
      <g filter="url(#lsoft)"><path d="M27 211 l41 0.5" stroke="#d4dae2" stroke-width="1.8" fill="none" opacity=".7"/><path d="M80 212 l50 0.5" stroke="#e4e8ec" stroke-width="1.8" fill="none" opacity=".7"/><path d="M32 211 l33 0.5" stroke="#5e6a80" stroke-width="1.8" fill="none" opacity=".7"/><path d="M84 209 l18 0.5" stroke="#5e6a80" stroke-width="1.8" fill="none" opacity=".7"/><path d="M4 213 l30 0.5" stroke="#d4dae2" stroke-width="1.8" fill="none" opacity=".7"/><path d="M77 212 l25 0.5" stroke="#d4dae2" stroke-width="1.8" fill="none" opacity=".7"/><path d="M23 220 l23 0.5" stroke="#d4dae2" stroke-width="1.8" fill="none" opacity=".7"/><path d="M17 207 l47 0.5" stroke="#e4e8ec" stroke-width="1.8" fill="none" opacity=".7"/><path d="M54 205 l30 0.5" stroke="#5e6a80" stroke-width="1.8" fill="none" opacity=".7"/><path d="M81 213 l33 0.5" stroke="#6a7890" stroke-width="1.8" fill="none" opacity=".7"/><path d="M140 204 l17 0.5" stroke="#e4e8ec" stroke-width="1.8" fill="none" opacity=".7"/><path d="M85 203 l48 0.5" stroke="#d4dae2" stroke-width="1.8" fill="none" opacity=".7"/><path d="M160 204 l45 0.5" stroke="#d4dae2" stroke-width="1.8" fill="none" opacity=".7"/><path d="M53 204 l15 0.5" stroke="#6a7890" stroke-width="1.8" fill="none" opacity=".7"/><path d="M185 207 l20 0.5" stroke="#e4e8ec" stroke-width="1.8" fill="none" opacity=".7"/><path d="M188 221 l24 0.5" stroke="#e4e8ec" stroke-width="1.8" fill="none" opacity=".7"/><path d="M40 208 l26 0.5" stroke="#e4e8ec" stroke-width="1.8" fill="none" opacity=".7"/><path d="M58 212 l21 0.5" stroke="#5e6a80" stroke-width="1.8" fill="none" opacity=".7"/><path d="M161 222 l16 0.5" stroke="#d4dae2" stroke-width="1.8" fill="none" opacity=".7"/><path d="M147 213 l22 0.5" stroke="#6a7890" stroke-width="1.8" fill="none" opacity=".7"/><path d="M49 211 l38 0.5" stroke="#6a7890" stroke-width="1.8" fill="none" opacity=".7"/><path d="M131 213 l46 0.5" stroke="#5e6a80" stroke-width="1.8" fill="none" opacity=".7"/><path d="M138 222 l27 0.5" stroke="#e4e8ec" stroke-width="1.8" fill="none" opacity=".7"/><path d="M81 209 l17 0.5" stroke="#e4e8ec" stroke-width="1.8" fill="none" opacity=".7"/><path d="M3 215 l46 0.5" stroke="#6a7890" stroke-width="1.8" fill="none" opacity=".7"/><path d="M78 233 q11 -2 22 0" stroke="#7c7a74" stroke-width="1.6" fill="none" opacity="0.64"/><path d="M23 258 q14 -2 28 0" stroke="#8a8680" stroke-width="1.6" fill="none" opacity="0.36"/><path d="M104 228 q5 -2 10 0" stroke="#e0dcd2" stroke-width="1.6" fill="none" opacity="0.37"/><path d="M136 280 q11 -2 22 0" stroke="#7c7a74" stroke-width="1.6" fill="none" opacity="0.55"/><path d="M95 282 q5 -2 9 0" stroke="#8a8680" stroke-width="1.6" fill="none" opacity="0.45"/><path d="M35 231 q7 -2 15 0" stroke="#8a8680" stroke-width="1.6" fill="none" opacity="0.39"/><path d="M137 235 q5 -2 10 0" stroke="#7c7a74" stroke-width="1.6" fill="none" opacity="0.55"/><path d="M149 253 q10 -2 20 0" stroke="#d8d4ca" stroke-width="1.6" fill="none" opacity="0.51"/><path d="M222 245 q7 -2 13 0" stroke="#8a8680" stroke-width="1.6" fill="none" opacity="0.59"/><path d="M59 258 q10 -2 20 0" stroke="#d8d4ca" stroke-width="1.6" fill="none" opacity="0.61"/><path d="M69 282 q5 -2 11 0" stroke="#e0dcd2" stroke-width="1.6" fill="none" opacity="0.41"/><path d="M82 279 q9 -2 17 0" stroke="#7c7a74" stroke-width="1.6" fill="none" opacity="0.62"/><path d="M138 276 q7 -2 15 0" stroke="#d8d4ca" stroke-width="1.6" fill="none" opacity="0.56"/><path d="M139 251 q13 -2 26 0" stroke="#d8d4ca" stroke-width="1.6" fill="none" opacity="0.52"/><path d="M159 228 q12 -2 23 0" stroke="#e0dcd2" stroke-width="1.6" fill="none" opacity="0.45"/><path d="M93 263 q4 -2 8 0" stroke="#e0dcd2" stroke-width="1.6" fill="none" opacity="0.47"/><path d="M147 253 q6 -2 13 0" stroke="#d8d4ca" stroke-width="1.6" fill="none" opacity="0.40"/><path d="M59 247 q14 -2 27 0" stroke="#7c7a74" stroke-width="1.6" fill="none" opacity="0.41"/><path d="M96 240 q6 -2 11 0" stroke="#e0dcd2" stroke-width="1.6" fill="none" opacity="0.65"/><path d="M67 249 q8 -2 16 0" stroke="#e0dcd2" stroke-width="1.6" fill="none" opacity="0.69"/><path d="M36 234 q7 -2 13 0" stroke="#8a8680" stroke-width="1.6" fill="none" opacity="0.35"/><path d="M199 235 q7 -2 14 0" stroke="#8a8680" stroke-width="1.6" fill="none" opacity="0.50"/><path d="M89 257 q14 -2 29 0" stroke="#7c7a74" stroke-width="1.6" fill="none" opacity="0.51"/><path d="M209 280 q11 -2 23 0" stroke="#e0dcd2" stroke-width="1.6" fill="none" opacity="0.49"/><path d="M95 252 q8 -2 17 0" stroke="#8a8680" stroke-width="1.6" fill="none" opacity="0.37"/><path d="M50 234 q8 -2 15 0" stroke="#7c7a74" stroke-width="1.6" fill="none" opacity="0.39"/><path d="M136 256 q14 -2 29 0" stroke="#7c7a74" stroke-width="1.6" fill="none" opacity="0.37"/><path d="M50 246 q11 -2 22 0" stroke="#d8d4ca" stroke-width="1.6" fill="none" opacity="0.56"/><path d="M114 231 q9 -2 19 0" stroke="#e0dcd2" stroke-width="1.6" fill="none" opacity="0.52"/><path d="M75 233 q12 -2 24 0" stroke="#d8d4ca" stroke-width="1.6" fill="none" opacity="0.52"/><path d="M166 254 q6 -2 13 0" stroke="#d8d4ca" stroke-width="1.6" fill="none" opacity="0.40"/><path d="M130 226 q10 -2 20 0" stroke="#7c7a74" stroke-width="1.6" fill="none" opacity="0.59"/><path d="M63 246 q6 -2 12 0" stroke="#8a8680" stroke-width="1.6" fill="none" opacity="0.54"/><path d="M187 243 q6 -2 13 0" stroke="#8a8680" stroke-width="1.6" fill="none" opacity="0.63"/><path d="M196 268 q6 -2 13 0" stroke="#e0dcd2" stroke-width="1.6" fill="none" opacity="0.47"/><path d="M7 226 q7 -2 14 0" stroke="#d8d4ca" stroke-width="1.6" fill="none" opacity="0.42"/><path d="M145 244 q13 -2 26 0" stroke="#d8d4ca" stroke-width="1.6" fill="none" opacity="0.68"/><path d="M88 237 q6 -2 13 0" stroke="#8a8680" stroke-width="1.6" fill="none" opacity="0.47"/><path d="M116 282 q11 -2 21 0" stroke="#7c7a74" stroke-width="1.6" fill="none" opacity="0.52"/><path d="M157 271 q5 -2 10 0" stroke="#7c7a74" stroke-width="1.6" fill="none" opacity="0.67"/><path d="M188 268 q9 -2 19 0" stroke="#8a8680" stroke-width="1.6" fill="none" opacity="0.50"/><path d="M153 229 q14 -2 29 0" stroke="#e0dcd2" stroke-width="1.6" fill="none" opacity="0.51"/><path d="M178 229 q6 -2 11 0" stroke="#8a8680" stroke-width="1.6" fill="none" opacity="0.36"/><path d="M142 251 q11 -2 22 0" stroke="#e0dcd2" stroke-width="1.6" fill="none" opacity="0.58"/><path d="M84 256 q5 -2 11 0" stroke="#7c7a74" stroke-width="1.6" fill="none" opacity="0.63"/><path d="M174 230 q12 -2 24 0" stroke="#8a8680" stroke-width="1.6" fill="none" opacity="0.50"/><path d="M209 273 q6 -2 13 0" stroke="#d8d4ca" stroke-width="1.6" fill="none" opacity="0.42"/><path d="M120 269 q8 -2 15 0" stroke="#e0dcd2" stroke-width="1.6" fill="none" opacity="0.64"/><path d="M15 268 q14 -2 28 0" stroke="#e0dcd2" stroke-width="1.6" fill="none" opacity="0.64"/><path d="M211 232 q6 -2 11 0" stroke="#7c7a74" stroke-width="1.6" fill="none" opacity="0.66"/><path d="M186 260 q13 -2 25 0" stroke="#8a8680" stroke-width="1.6" fill="none" opacity="0.41"/><path d="M114 267 q10 -2 20 0" stroke="#d8d4ca" stroke-width="1.6" fill="none" opacity="0.59"/><path d="M127 252 q13 -2 25 0" stroke="#7c7a74" stroke-width="1.6" fill="none" opacity="0.44"/><path d="M66 270 q10 -2 19 0" stroke="#7c7a74" stroke-width="1.6" fill="none" opacity="0.62"/><path d="M219 250 q11 -2 21 0" stroke="#8a8680" stroke-width="1.6" fill="none" opacity="0.59"/><path d="M109 255 q9 -2 19 0" stroke="#8a8680" stroke-width="1.6" fill="none" opacity="0.59"/><path d="M210 280 q7 -2 14 0" stroke="#8a8680" stroke-width="1.6" fill="none" opacity="0.64"/><path d="M33 231 q9 -2 18 0" stroke="#7c7a74" stroke-width="1.6" fill="none" opacity="0.58"/><path d="M103 237 q7 -2 15 0" stroke="#7c7a74" stroke-width="1.6" fill="none" opacity="0.66"/><path d="M37 266 q11 -2 23 0" stroke="#8a8680" stroke-width="1.6" fill="none" opacity="0.44"/></g>
      <g filter="url(#lblur2)">
        <path d="M0 236 Q90 230 170 238 Q230 246 250 258 L250 283 L0 283Z" fill="#c8c2b4" opacity=".35"/>
      </g>
      <rect x="190" y="244" width="143" height="39" fill="url(#lwdark)"/>
      <!-- boat streak -->
      <rect x="124" y="201" width="96" height="13" fill="#d6d8dc" opacity=".55" filter="url(#lsoft)"/>
      <rect x="124" y="213.5" width="96" height="5" fill="#3656a4"/>
      <rect x="145.5" y="208" width="2.2" height="18" fill="#3a3a44"/>
      <!-- bridge -->
      <g filter="url(#lsoft)">
      <path d="M186 178 L226 168 L333 161 L333 184 L226 186 L186 190Z" fill="#a6b6a8"/>
      <path d="M186 178 L226 168 L333 161 L333 166 L226 172 L186 182Z" fill="#7a9286"/>
      <path d="M186 190 L198 188 L198 212 L186 210Z" fill="#9aa89e"/>
      <path d="M188 210 Q189 194 192 192 Q196 194 197 210Z" fill="#303838"/>
      <path d="M198 188 L212 187 L212 212 L198 212Z" fill="#a6b4a8"/>
      <path d="M200 211 Q201 192 205 190 Q210 192 211 211Z" fill="#2e3638"/>
      <rect x="212" y="183" width="18" height="30" fill="#a8b6aa"/>
      <path d="M213 212 Q214 188 218 184 Q223 188 225 212Z" fill="#2c3436"/>
      <rect x="225" y="166" width="6" height="50" fill="#c4c0b2"/>
      <rect x="231" y="181" width="23" height="36" fill="#a8b6aa"/>
      <path d="M232 216 Q233 186 243 181 Q252 186 253 216Z" fill="#2e3638"/>
      <rect x="234" y="203" width="19" height="13" fill="#a4aeae"/>
      <rect x="254" y="164" width="12" height="67" fill="#c8c4b4"/>
      <rect x="254" y="204" width="12" height="5" fill="#6e5e58"/>
      <rect x="266" y="176" width="67" height="56" fill="#a8b8ac"/>
      <path d="M268 232 Q270 192 300 185 Q330 190 333 198 L333 232Z" fill="#2c3436"/>
      <rect x="270" y="206" width="63" height="25" fill="#b4bebc"/>
      <path d="M268 232 Q270 192 300 185 Q330 190 333 198" stroke="#88a896" stroke-width="3" fill="none"/>
      <rect x="213" y="210" width="41" height="13" fill="#2f3234"/>
      <rect x="221" y="231" width="112" height="14" fill="#34363a"/>
      <rect x="322" y="262" width="11" height="21" fill="#9a9aa0"/>
      </g>
    </symbol>
  </defs>
</svg>
</body></html>
